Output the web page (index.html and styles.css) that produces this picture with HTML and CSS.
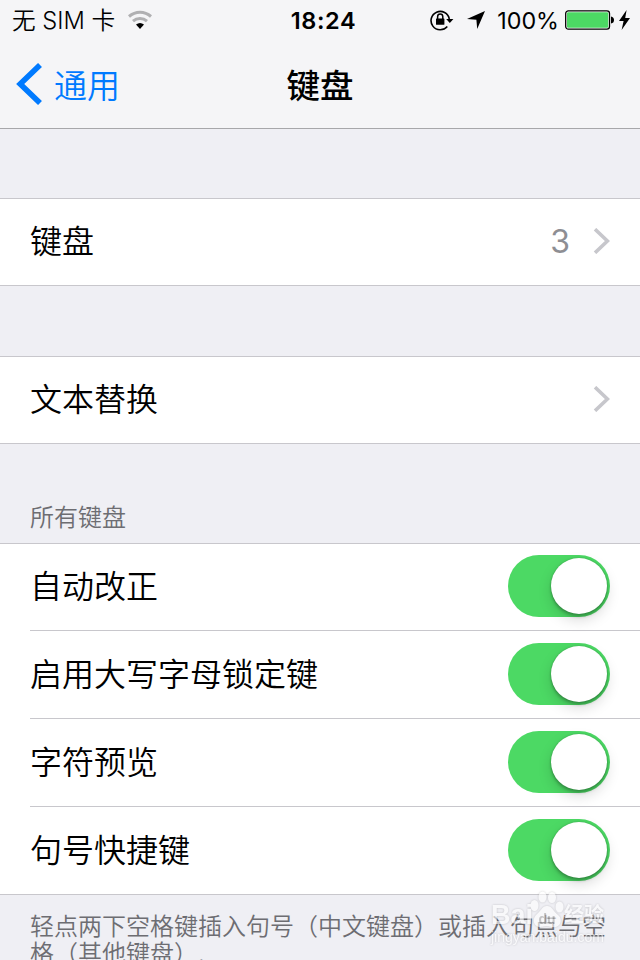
FILE: index.html
```html
<!DOCTYPE html>
<html lang="zh-CN">
<head>
    <meta charset="UTF-8">
    <meta name="viewport" content="width=device-width, initial-scale=1.0">
    <title>键盘</title>
    <link rel="stylesheet" href="styles.css">
</head>
<body>
    <header class="top">
        <div class="status-bar">
            <div class="status-left">
                <span class="carrier">无 SIM 卡</span>
                <svg class="wifi" width="26" height="20" viewBox="0 0 26 20" fill="none">
                    <path d="M2 6.5C8.5 0.8 17.5 0.8 24 6.5" stroke="#b0b0b2" stroke-width="3"/>
                    <path d="M6 11.2C10 7.6 16 7.6 20 11.2" stroke="#b0b0b2" stroke-width="3"/>
                    <path d="M9 14.6Q13 11.4 17 14.6L13 19Z" fill="#000"/>
                </svg>
            </div>
            <span class="clock">18:24</span>
            <div class="status-right">
                <svg class="lock" width="24" height="22" viewBox="0 0 24 22" fill="none">
                    <path d="M17.3 17.5A9.2 9.2 0 1 1 19.3 10" stroke="#000" stroke-width="1.6"/>
                    <path d="M16.2 10H23.4L19.8 14Z" fill="#000"/>
                    <rect x="6" y="9.4" width="8.4" height="6.4" rx="0.6" fill="#000"/>
                    <path d="M7.6 10V7.7a2.6 2.6 0 0 1 5.2 0V10" stroke="#000" stroke-width="1.5"/>
                </svg>
                <svg class="location" width="18" height="18" viewBox="0 0 18 18">
                    <path d="M18 0L10.2 18L9.4 8.8L0 8Z" fill="#000"/>
                </svg>
                <span class="percent">100%</span>
                <svg class="battery" width="49" height="20" viewBox="0 0 49 20">
                    <rect x="0.7" y="0.9" width="43.8" height="18.2" rx="2.6" fill="#fff" stroke="#000" stroke-width="1.3"/>
                    <rect x="2" y="2.2" width="41.2" height="15.6" rx="1.2" fill="#4cd964"/>
                    <path d="M46 6.5Q49 7 49 10T46 13.5Z" fill="#000"/>
                </svg>
                <svg class="bolt" width="11" height="20" viewBox="0 0 11 20">
                    <path d="M7.6 0L0 11H4.6L2.6 20L11 8H6.2Z" fill="#000"/>
                </svg>
            </div>
        </div>
        <nav class="nav-bar">
            <a class="back" href="#">
                <svg width="26" height="42" viewBox="0 0 26 42" fill="none">
                    <path d="M24 2L4.2 21L24 40" stroke="#007aff" stroke-width="5.6"/>
                </svg>
                <span>通用</span>
            </a>
            <h1>键盘</h1>
        </nav>
    </header>

    <main>
        <section class="group">
            <div class="row">
                <span class="label">键盘</span>
                <span class="value">3</span>
                <svg class="chevron" width="17" height="26" viewBox="0 0 17 26" fill="none">
                    <path d="M2 1.2L14.4 13L2 24.8" stroke="#c7c7cc" stroke-width="3.6"/>
                </svg>
            </div>
        </section>

        <section class="group">
            <div class="row">
                <span class="label">文本替换</span>
                <svg class="chevron" width="17" height="26" viewBox="0 0 17 26" fill="none">
                    <path d="M2 1.2L14.4 13L2 24.8" stroke="#c7c7cc" stroke-width="3.6"/>
                </svg>
            </div>
        </section>

        <h2 class="group-title">所有键盘</h2>
        <section class="group switches">
            <div class="row">
                <span class="label">自动改正</span>
                <span class="switch"><span class="knob"></span></span>
            </div>
            <div class="row">
                <span class="label">启用大写字母锁定键</span>
                <span class="switch"><span class="knob"></span></span>
            </div>
            <div class="row">
                <span class="label">字符预览</span>
                <span class="switch"><span class="knob"></span></span>
            </div>
            <div class="row">
                <span class="label">句号快捷键</span>
                <span class="switch"><span class="knob"></span></span>
            </div>
        </section>
        <p class="note">轻点两下空格键插入句号（中文键盘）或插入句点与空格（其他键盘）.</p>
    </main>

    <div class="watermark">
        <div class="brand">
            <span class="bai">Bai</span>
            <svg width="34" height="37" viewBox="0 0 34 37" fill="#fff">
                <ellipse cx="4.5" cy="14.5" rx="4" ry="5.5"/>
                <ellipse cx="12.5" cy="6" rx="4" ry="5.5"/>
                <ellipse cx="22" cy="6.5" rx="4" ry="5.5"/>
                <ellipse cx="29.5" cy="16" rx="4" ry="5.5"/>
                <path d="M17 15C12 15 11 20 7 23C2 27 3 35 9 36C13 36 14 35 17 35S22 37 26 36C32 34 32 27 28 24C23 20 22 15 17 15Z"/>
                <text class="du" x="8.5" y="33">du</text>
            </svg>
            <span class="jingyan">经验</span>
        </div>
        <div class="site">jingyan.baidu.com</div>
    </div>
</body>
</html>
```

FILE: styles.css
```css
* {
    box-sizing: border-box;
}
body {
    margin: 0;
    height: 960px;
    overflow: hidden;
    position: relative;
    background-color: #efeff4;
    color: #000;
    font-family: Inter, "Noto Sans CJK SC", sans-serif;
}
.top {
    height: 129px;
    background-color: #f5f5f7;
    border-bottom: 1px solid #a7a7aa;
}
.status-bar {
    display: grid;
    grid-template-columns: 1fr auto 1fr;
    align-items: center;
    height: 40px;
    padding: 0 9px 0 12px;
    font-size: 23.5px;
    line-height: 40px;
}
.status-left,
.status-right {
    display: flex;
    align-items: center;
}
.status-right {
    justify-content: flex-end;
}
.carrier,
.clock,
.percent {
    padding-top: 2px;
    line-height: 38px;
}
.carrier {
    font-size: 23.7px;
    font-weight: 350;
}
.wifi {
    margin-left: 12px;
}
.clock {
    padding-left: 4px;
    font-size: 23.5px;
    font-weight: 600;
    letter-spacing: 0.6px;
}
.location {
    margin: 0 12px 0 13px;
}
.percent {
    font-size: 23.3px;
    letter-spacing: 0;
}
.battery {
    margin: 0 5px 0 6px;
}
.bolt {
    margin-right: 1px;
}
.nav-bar {
    display: grid;
    grid-template-columns: 1fr auto 1fr;
    align-items: center;
    height: 88px;
    padding: 0 16px;
}
.back {
    display: flex;
    align-items: center;
    gap: 12px;
    color: #007aff;
    font-size: 33px;
    font-weight: 350;
    line-height: 48px;
    text-decoration: none;
}
.back span,
.nav-bar h1 {
    padding-top: 3px;
}
.nav-bar h1 {
    margin: 0;
    font-size: 33.5px;
    line-height: 48px;
    font-weight: 500;
}
.group {
    margin-top: 69px;
    background-color: #fff;
    border-top: 1px solid #c8c7cc;
    border-bottom: 1px solid #c8c7cc;
}
.group + .group {
    margin-top: 70px;
}
.row {
    display: flex;
    align-items: center;
    height: 86px;
    padding: 0 30px 2px 0;
    margin-left: 30px;
}
.label {
    flex: 1;
    padding-top: 2px;
    font-size: 32px;
    font-weight: 350;
    line-height: 48px;
}
.value {
    margin-right: 23px;
    color: #8e8e93;
    font-size: 32px;
}
.group-title {
    margin: 0;
    padding: 56px 30px 8px;
    color: #6d6d72;
    font-size: 24px;
    line-height: 35px;
    font-weight: 350;
}
.group.switches {
    margin-top: 0;
}
.switches .row {
    height: 88px;
    border-bottom: 1px solid #c8c7cc;
}
.switches .row:first-child {
    height: 87px;
}
.switches .row:last-child {
    height: 87px;
    border-bottom: none;
}
.switch {
    display: flex;
    justify-content: flex-end;
    width: 102px;
    height: 62px;
    padding: 3px;
    border-radius: 31px;
    background-color: #4cd964;
}
.knob {
    width: 56px;
    height: 56px;
    border-radius: 50%;
    background-color: #fff;
    box-shadow: 0 6px 14px rgba(0, 0, 0, 0.15), 0 3px 3px rgba(0, 0, 0, 0.2), 0 0 2px rgba(0, 0, 0, 0.25);
}
.note {
    margin: 0;
    padding: 18px 30px 0;
    color: #6d6d72;
    font-size: 24px;
    line-height: 27px;
    font-weight: 350;
}
/* site mark laid over the footer */
.watermark {
    position: absolute;
    left: 491px;
    top: 891px;
    width: 118px;
    color: #fff;
    opacity: 0.6;
    font-family: "Liberation Sans", "Noto Sans CJK SC", sans-serif;
    filter: drop-shadow(0 0 1px rgba(0, 0, 0, 0.3));
}
.brand {
    display: flex;
    align-items: flex-end;
    height: 37px;
}
.bai {
    width: 39px;
    font-size: 27px;
    line-height: 26px;
    font-weight: bold;
}
.du {
    font-size: 14px;
    font-weight: bold;
    fill: #aaa;
}
.jingyan {
    font-size: 20px;
    line-height: 26px;
    font-weight: bold;
    white-space: nowrap;
}
.site {
    font-size: 14px;
    line-height: 18px;
}
```
